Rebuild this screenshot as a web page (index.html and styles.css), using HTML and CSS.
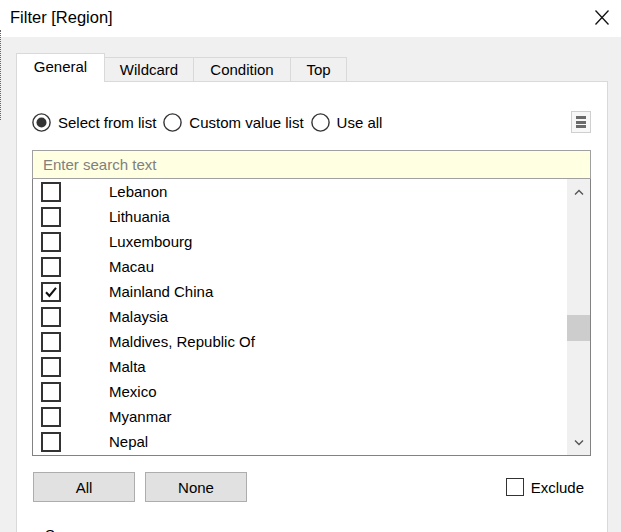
FILE: index.html
```html
<!DOCTYPE html>
<html>
<head>
<meta charset="utf-8">
<link rel="stylesheet" href="styles.css">
</head>
<body>
<div class="window">
  <div class="edge"></div>
  <div class="titlebar">
    <span class="title">Filter [Region]</span>
    <svg class="close" width="14" height="15" viewBox="0 0 14 15"><path d="M0.5 0.5 L13.5 14.5 M13.5 0.5 L0.5 14.5" stroke="#111" stroke-width="1.3" fill="none"/></svg>
  </div>
  <div class="content">
    <div class="tabs">
      <div class="tab active">General</div>
      <div class="tab">Wildcard</div>
      <div class="tab">Condition</div>
      <div class="tab">Top</div>
    </div>
    <div class="panel">
      <div class="mode-row">
        <label class="radio">
          <svg width="19" height="19" viewBox="0 0 19 19"><circle cx="9.5" cy="9.5" r="8.6" fill="#fff" stroke="#333" stroke-width="1.4"/><circle cx="9.5" cy="9.5" r="5" fill="#333"/></svg>
          <span>Select from list</span>
        </label>
        <label class="radio">
          <svg width="19" height="19" viewBox="0 0 19 19"><circle cx="9.5" cy="9.5" r="8.6" fill="#fff" stroke="#333" stroke-width="1.4"/></svg>
          <span>Custom value list</span>
        </label>
        <label class="radio">
          <svg width="19" height="19" viewBox="0 0 19 19"><circle cx="9.5" cy="9.5" r="8.6" fill="#fff" stroke="#333" stroke-width="1.4"/></svg>
          <span>Use all</span>
        </label>
        <div class="menu-btn"><span></span><span></span><span></span></div>
      </div>
      <div class="search">Enter search text</div>
      <div class="list">
        <div class="rows">
          <div class="row"><span class="cb"></span><span class="name">Lebanon</span></div>
          <div class="row"><span class="cb"></span><span class="name">Lithuania</span></div>
          <div class="row"><span class="cb"></span><span class="name">Luxembourg</span></div>
          <div class="row"><span class="cb"></span><span class="name">Macau</span></div>
          <div class="row"><span class="cb"><svg width="16" height="16" viewBox="0 0 16 16"><path d="M3 8.2 L6.4 11.8 L13 3.8" stroke="#111" stroke-width="2.1" fill="none"/></svg></span><span class="name">Mainland China</span></div>
          <div class="row"><span class="cb"></span><span class="name">Malaysia</span></div>
          <div class="row"><span class="cb"></span><span class="name">Maldives, Republic Of</span></div>
          <div class="row"><span class="cb"></span><span class="name">Malta</span></div>
          <div class="row"><span class="cb"></span><span class="name">Mexico</span></div>
          <div class="row"><span class="cb"></span><span class="name">Myanmar</span></div>
          <div class="row"><span class="cb"></span><span class="name">Nepal</span></div>
        </div>
        <div class="scrollbar">
          <div class="arrow"><svg width="10" height="6" viewBox="0 0 10 6"><path d="M1 5.5 L5 1.5 L9 5.5" stroke="#555" stroke-width="1.4" fill="none"/></svg></div>
          <div class="track">
            <div class="thumb"></div>
          </div>
          <div class="arrow"><svg width="10" height="6" viewBox="0 0 10 6"><path d="M1 0.5 L5 4.5 L9 0.5" stroke="#555" stroke-width="1.4" fill="none"/></svg></div>
        </div>
      </div>
      <div class="button-row">
        <div class="btn">All</div>
        <div class="btn">None</div>
        <label class="exclude"><span class="cb small"></span><span>Exclude</span></label>
      </div>
      <div class="summary">Summary</div>
    </div>
  </div>
</div>
</body>
</html>
```

FILE: styles.css
```css
html, body {
  margin: 0;
  padding: 0;
}
body {
  width: 621px;
  height: 532px;
  overflow: hidden;
  background: #f0f0f0;
  font-family: "Liberation Sans", Arial, sans-serif;
  font-size: 15px;
  color: #000;
}
.window {
  position: relative;
  width: 621px;
  height: 532px;
  overflow: hidden;
}
.edge {
  position: absolute;
  left: 0;
  top: 30px;
  width: 1px;
  height: 90px;
  border-left: 1px dotted #666;
}
.titlebar {
  height: 37px;
  background: #fff;
  display: flex;
  align-items: center;
  justify-content: space-between;
  padding: 0 12px 0 10px;
}
.title {
  font-size: 16.5px;
  margin-top: -2px;
}
.close {
  margin-top: -3px;
}
.content {
  padding: 16px 13px 0 16px;
}
.tabs {
  display: flex;
  align-items: flex-end;
  height: 29px;
  position: relative;
  z-index: 1;
}
.tab {
  height: 24px;
  box-sizing: border-box;
  border: 1px solid #d9d9d9;
  border-bottom: none;
  background: #f0f0f0;
  display: flex;
  align-items: center;
  justify-content: center;
  margin-bottom: 1px;
  margin-left: -1px;
}
.tab:nth-child(2) { width: 90px; }
.tab:nth-child(3) { width: 98px; }
.tab:nth-child(4) { width: 57px; }
.tab.active {
  width: 89px;
  height: 29px;
  background: #fff;
  margin-bottom: 0;
  margin-left: 0;
  padding-bottom: 4px;
  box-sizing: border-box;
}
.panel {
  background: #fff;
  border: 1px solid #d9d9d9;
  margin-top: -1px;
  height: 460px;
  padding: 0 16px 0 15px;
}
.mode-row {
  display: flex;
  align-items: center;
  height: 22px;
  margin-top: 29px;
  padding-left: 0;
}
.radio {
  display: flex;
  align-items: center;
  gap: 7px;
  margin-right: 7px;
}
.radio svg {
  display: block;
}
.menu-btn {
  margin-left: auto;
  width: 20px;
  height: 22px;
  box-sizing: border-box;
  border: 1px solid #cfcfcf;
  background: #f7f7f7;
  display: flex;
  flex-direction: column;
  align-items: center;
  justify-content: center;
  gap: 1.5px;
}
.menu-btn span {
  width: 10px;
  height: 3px;
  background: #6a6a6a;
}
.search {
  margin-top: 17px;
  height: 29px;
  box-sizing: border-box;
  border: 1px solid #a0a0a0;
  background: #ffffe1;
  color: #808080;
  padding-left: 10px;
  display: flex;
  align-items: center;
}
.list {
  height: 277px;
  box-sizing: border-box;
  border: 1px solid #828282;
  border-top: none;
  display: flex;
}
.rows {
  flex: 1;
}
.row {
  height: 25px;
  display: flex;
  align-items: center;
  padding-left: 8px;
}
.cb {
  width: 20px;
  height: 20px;
  box-sizing: border-box;
  border: 2px solid #333;
  background: #fff;
  display: flex;
  align-items: center;
  justify-content: center;
  flex: none;
}
.name {
  margin-left: 48px;
}
.scrollbar {
  width: 23px;
  background: #f0f0f0;
  display: flex;
  flex-direction: column;
}
.arrow {
  height: 25px;
  display: flex;
  align-items: center;
  justify-content: center;
}
.track {
  flex: 1;
  padding-top: 111px;
}
.thumb {
  height: 26px;
  background: #cdcdcd;
}
.button-row {
  display: flex;
  align-items: center;
  margin-top: 16px;
  padding-left: 1px;
}
.btn {
  width: 102px;
  height: 30px;
  box-sizing: border-box;
  border: 1px solid #adadad;
  background: #e1e1e1;
  display: flex;
  align-items: center;
  justify-content: center;
  margin-right: 10px;
}
.exclude {
  margin-left: auto;
  margin-right: 7px;
  display: flex;
  align-items: center;
  gap: 7px;
}
.cb.small {
  width: 18px;
  height: 18px;
  border: 1.5px solid #333;
}
.summary {
  margin-top: 24px;
  padding-left: 13px;
}
```
